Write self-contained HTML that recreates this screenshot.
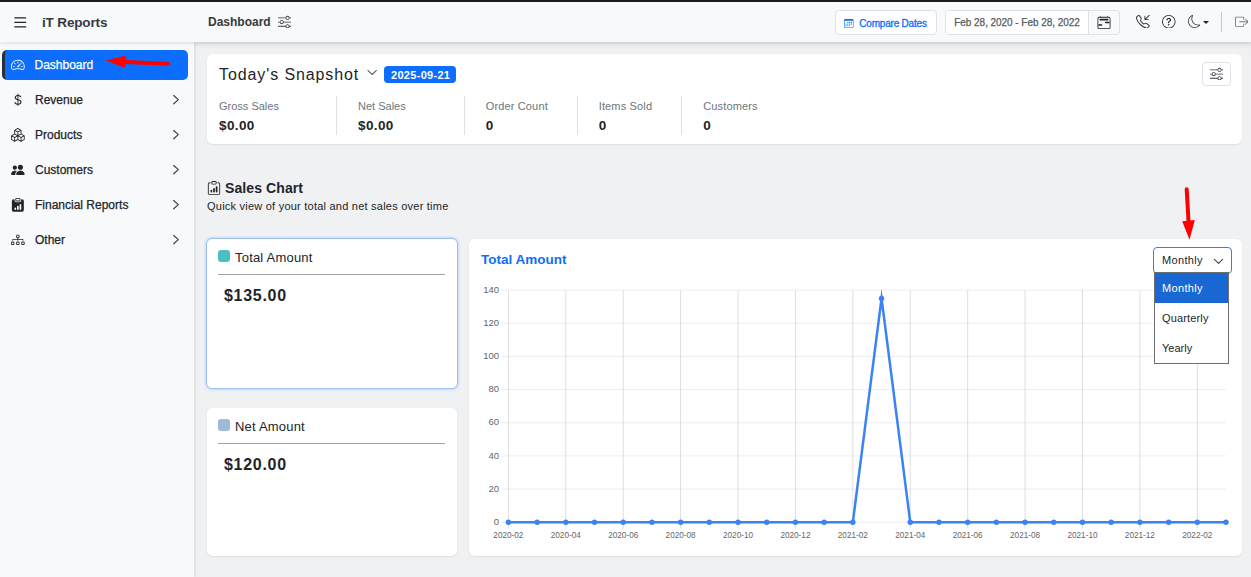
<!DOCTYPE html>
<html lang="en">
<head>
<meta charset="utf-8">
<title>iT Reports - Dashboard</title>
<style>
*{box-sizing:border-box;}
html,body{margin:0;padding:0;}
body{width:1251px;height:577px;overflow:hidden;background:#f0f1f3;font-family:"Liberation Sans",Arial,sans-serif;color:#212529;position:relative;}
.abs{position:absolute;}
#topbar{left:0;top:0;width:1251px;height:2px;background:#181b1f;z-index:9;}
#header{left:0;top:2px;width:1251px;height:40px;background:#f8f9fb;box-shadow:0 1px 4px rgba(0,0,0,.12);z-index:5;}
#sidebar{left:0;top:42px;width:194px;height:535px;background:#f8f9fa;box-shadow:1px 0 3px rgba(0,0,0,.10);z-index:3;}
#main{left:194px;top:42px;width:1057px;height:535px;background:#f0f1f3;box-shadow:inset 0 6px 6px -4px rgba(0,0,0,.07);}
.t{position:absolute;white-space:nowrap;line-height:1;}
.nav{position:absolute;left:2px;width:186px;height:30px;border-radius:5px;}
.nav.active{background:#0d6efd;border-left:3px solid #2b2f36;}
.nav .lbl{position:absolute;left:33px;top:8px;font-size:12px;-webkit-text-stroke:.25px currentColor;line-height:14px;color:#212529;white-space:nowrap;}
.nav.active .lbl{color:#fff;left:29.5px;}
.card{position:absolute;background:#fff;border-radius:6px;box-shadow:0 1px 2px rgba(0,0,0,.08);}
.stat-l{font-size:11px;color:#6c757d;}
.stat-v{font-size:13.5px;letter-spacing:.4px;font-weight:bold;color:#212529;}
.vsep{position:absolute;top:96px;width:1px;height:39px;background:#dee2e6;}
.btn{position:absolute;background:#fff;border:1px solid #dee2e6;border-radius:4px;}
.opt{position:absolute;left:0;width:73px;height:30px;font-size:11px;line-height:30px;padding-left:7px;color:#212529;}
</style>
</head>
<body>
<div id="topbar" class="abs"></div>
<div id="header" class="abs">
<svg class="abs" style="left:12px;top:12px" width="18" height="18" viewBox="12 14 18 18"><path d="M14.8 17.8H25.7M14.8 22.35H25.7M14.8 26.9H25.7" stroke="#212529" stroke-width="1.25" stroke-linecap="round" fill="none"/></svg>
<div class="t" style="left:42px;top:14px;font-size:13.5px;letter-spacing:-.15px;font-weight:bold;color:#343a40">iT Reports</div>
<div class="t" style="left:208px;top:14px;font-size:12px;font-weight:bold;color:#343a40">Dashboard</div>
<svg class="abs" style="left:278.2px;top:13.1px" width="13.3" height="13.3" viewBox="0 0 16 16" fill="#343a40" ><path fill-rule="evenodd" d="M11.5 2a1.5 1.5 0 1 0 0 3 1.5 1.5 0 0 0 0-3M9.05 3a2.5 2.5 0 0 1 4.9 0H16v1h-2.05a2.5 2.5 0 0 1-4.9 0H0V3zM4.5 7a1.5 1.5 0 1 0 0 3 1.5 1.5 0 0 0 0-3M2.05 8a2.5 2.5 0 0 1 4.9 0H16v1H6.95a2.5 2.5 0 0 1-4.9 0H0V8zm9.45 4a1.5 1.5 0 1 0 0 3 1.5 1.5 0 0 0 0-3m-2.45 1a2.5 2.5 0 0 1 4.9 0H16v1h-2.05a2.5 2.5 0 0 1-4.9 0H0v-1z"/></svg>
<div class="btn" style="left:835px;top:8px;width:102px;height:25px"></div>
<svg class="abs" style="left:844px;top:17px" width="9.5" height="9" viewBox="0 0 16 16" fill="#0d6efd" preserveAspectRatio="none"><path d="M14 0H2a2 2 0 0 0-2 2v12a2 2 0 0 0 2 2h12a2 2 0 0 0 2-2V2a2 2 0 0 0-2-2M1 3.857C1 3.384 1.448 3 2 3h12c.552 0 1 .384 1 .857v10.286c0 .473-.448.857-1 .857H2c-.552 0-1-.384-1-.857z"/><path d="M6.5 7a1 1 0 1 0 0-2 1 1 0 0 0 0 2m3 0a1 1 0 1 0 0-2 1 1 0 0 0 0 2m3 0a1 1 0 1 0 0-2 1 1 0 0 0 0 2m-9 3a1 1 0 1 0 0-2 1 1 0 0 0 0 2m3 0a1 1 0 1 0 0-2 1 1 0 0 0 0 2m3 0a1 1 0 1 0 0-2 1 1 0 0 0 0 2m3 0a1 1 0 1 0 0-2 1 1 0 0 0 0 2m-9 3a1 1 0 1 0 0-2 1 1 0 0 0 0 2m3 0a1 1 0 1 0 0-2 1 1 0 0 0 0 2m3 0a1 1 0 1 0 0-2 1 1 0 0 0 0 2"/></svg>
<div class="t" style="left:859.3px;top:17.1px;font-size:10px;letter-spacing:-.2px;-webkit-text-stroke:.3px;color:#0d6efd">Compare Dates</div>
<div class="btn" style="left:945px;top:8px;width:175px;height:25px;background:#f8f9fa"></div>
<div class="abs" style="left:946px;top:9px;width:143px;height:23px;background:#fff;border-right:1px solid #dee2e6;border-radius:3px 0 0 3px"></div>
<div class="t" style="left:954.3px;top:16.4px;font-size:10px;letter-spacing:-.05px;-webkit-text-stroke:.25px;color:#555b61">Feb 28, 2020 - Feb 28, 2022</div>
<svg class="abs" style="left:1097px;top:14px" width="14" height="13" viewBox="0 0 16 16" fill="#212529" ><path d="M3.5 0a.5.5 0 0 1 .5.5V1h8V.5a.5.5 0 0 1 1 0V1h1a2 2 0 0 1 2 2v11a2 2 0 0 1-2 2H2a2 2 0 0 1-2-2V3a2 2 0 0 1 2-2h1V.5a.5.5 0 0 1 .5-.5M2 2a1 1 0 0 0-1 1v11a1 1 0 0 0 1 1h12a1 1 0 0 0 1-1V3a1 1 0 0 0-1-1z"/><path d="M2.5 4a.5.5 0 0 1 .5-.5h10a.5.5 0 0 1 .5.5v1a.5.5 0 0 1-.5.5H3a.5.5 0 0 1-.5-.5zM9 8a1 1 0 0 1 1-1h5v2h-5a1 1 0 0 1-1-1m-8 2h4a1 1 0 1 1 0 2H1z"/></svg>
<svg class="abs" style="left:1136.3px;top:12.5px" width="13.6" height="13.6" viewBox="0 0 16 16" fill="#212529" ><path d="M15.854.146a.5.5 0 0 1 0 .708L11.707 5H14.500a.5.5 0 0 1 0 1h-4a.5.5 0 0 1-.5-.5v-4a.5.5 0 0 1 1 0v2.793L15.146.146a.5.5 0 0 1 .708 0m-12.200 1.182a.678.678 0 0 0-1.015-.063L1.605 2.300c-.483.484-.661 1.169-.450 1.770a17.600 17.600 0 0 0 4.168 6.608 17.600 17.600 0 0 0 6.608 4.168c.601.211 1.286.033 1.770-.450l1.034-1.034a.678.678 0 0 0-.063-1.015l-2.307-1.794a.68.68 0 0 0-.580-.122l-2.190.547a1.750 1.750 0 0 1-1.657-.459L5.482 8.062a1.750 1.750 0 0 1-.460-1.657l.548-2.190a.68.68 0 0 0-.122-.580zM1.884.511a1.745 1.745 0 0 1 2.612.163L6.290 2.980c.329.423.445.974.315 1.494l-.547 2.190a.68.68 0 0 0 .178.643l2.457 2.457a.68.68 0 0 0 .644.178l2.189-.547a1.750 1.750 0 0 1 1.494.315l2.306 1.794c.829.645.905 1.870.163 2.611l-1.034 1.034c-.740.740-1.846 1.065-2.877.702a18.600 18.600 0 0 1-7.010-4.420 18.600 18.600 0 0 1-4.420-7.009c-.362-1.030-.037-2.137.703-2.877z"/></svg>
<svg class="abs" style="left:1162px;top:12.5px" width="13.6" height="13.6" viewBox="0 0 16 16" fill="#212529" ><path d="M8 15A7 7 0 1 1 8 1a7 7 0 0 1 0 14m0 1A8 8 0 1 0 8 0a8 8 0 0 0 0 16"/><path d="M5.255 5.786a.237.237 0 0 0 .241.247h.825c.138 0 .248-.113.266-.250.090-.656.540-1.134 1.342-1.134.686 0 1.314.343 1.314 1.168 0 .635-.374.927-.965 1.371-.673.489-1.206 1.060-1.168 1.987l.003.217a.25.25 0 0 0 .25.246h.811a.25.25 0 0 0 .25-.250v-.105c0-.718.273-.927 1.010-1.486.609-.463 1.244-.977 1.244-2.056 0-1.511-1.276-2.241-2.673-2.241-1.267 0-2.655.590-2.750 2.286m1.557 5.763c0 .533.425.927 1.010.927.609 0 1.028-.394 1.028-.927 0-.552-.420-.940-1.029-.940-.584 0-1.009.388-1.009.940"/></svg>
<svg class="abs" style="left:1188px;top:12.5px" width="13" height="13" viewBox="0 0 16 16" fill="#343a40" ><path d="M6 .278a.77.77 0 0 1 .080.858 7.200 7.200 0 0 0-.878 3.460c0 4.021 3.278 7.277 7.318 7.277q.792-.001 1.533-.160a.79.79 0 0 1 .810.316.73.73 0 0 1-.031.893A8.350 8.350 0 0 1 8.344 16C3.734 16 0 12.286 0 7.710 0 4.266 2.114 1.312 5.124.060A.75.75 0 0 1 6 .278M4.858 1.311A7.270 7.270 0 0 0 1.025 7.710c0 4.020 3.279 7.276 7.319 7.276a7.320 7.320 0 0 0 5.205-2.162q-.506.063-1.029.063c-4.610 0-8.343-3.714-8.343-8.290 0-1.167.242-2.278.681-3.286"/></svg>
<svg class="abs" style="left:1203px;top:19px" width="6" height="3" viewBox="0 0 6 3"><path d="M0 0h6L3 3z" fill="#212529"/></svg>
<div class="abs" style="left:1221px;top:10px;width:1px;height:20px;background:#c4c8cc"></div>
<svg class="abs" style="left:1234.6px;top:12.9px" width="13.5" height="13.5" viewBox="0 0 16 16" fill="#6c757d" ><path fill-rule="evenodd" d="M10 12.500a.5.5 0 0 1-.5.5h-8a.5.5 0 0 1-.5-.5v-9a.5.5 0 0 1 .5-.5h8a.5.5 0 0 1 .5.5v2a.5.5 0 0 0 1 0v-2A1.500 1.500 0 0 0 9.500 2h-8A1.500 1.500 0 0 0 0 3.500v9A1.500 1.500 0 0 0 1.500 14h8a1.500 1.500 0 0 0 1.500-1.500v-2a.5.5 0 0 0-1 0z"/><path fill-rule="evenodd" d="M15.854 8.354a.5.5 0 0 0 0-.708l-3-3a.5.5 0 0 0-.708.708L14.293 7.500H5.500a.5.5 0 0 0 0 1h8.793l-2.147 2.146a.5.5 0 0 0 .708.708z"/></svg>
</div>
<div id="sidebar" class="abs">
<div class="nav active" style="top:8px">
<svg class="abs" style="left:6.15px;top:8.15px" width="13.7" height="13.7" viewBox="0 0 16 16" fill="#fff" ><path d="M8 4a.5.5 0 0 1 .5.5V6a.5.5 0 0 1-1 0V4.5A.5.5 0 0 1 8 4M3.732 5.732a.5.5 0 0 1 .707 0l.915.914a.5.5 0 1 1-.708.708l-.914-.915a.5.5 0 0 1 0-.707M2 10a.5.5 0 0 1 .5-.5h1.586a.5.5 0 0 1 0 1H2.5A.5.5 0 0 1 2 10m9.5 0a.5.5 0 0 1 .5-.5h1.5a.5.5 0 0 1 0 1H12a.5.5 0 0 1-.5-.5m.754-4.246a.39.39 0 0 0-.527-.02L7.547 9.31a.91.91 0 1 0 1.302 1.258l3.434-4.297a.39.39 0 0 0-.029-.518z"/><path fill-rule="evenodd" d="M0 10a8 8 0 1 1 15.547 2.661c-.442 1.253-1.845 1.602-2.932 1.25C11.309 13.488 9.475 13 8 13c-1.474 0-3.31.488-4.615.911-1.087.352-2.49.003-2.932-1.25A8 8 0 0 1 0 10m8-7a7 7 0 0 0-6.603 9.329c.203.575.923.876 1.68.63C4.397 12.533 6.358 12 8 12s3.604.532 4.923.96c.757.245 1.477-.056 1.68-.631A7 7 0 0 0 8 3"/></svg>
<span class="lbl">Dashboard</span>
</div>
<div class="nav" style="top:43px">
<svg class="abs" style="left:9.15px;top:8.15px" width="13.7" height="13.7" viewBox="0 0 16 16" fill="#212529" ><path d="M4 10.781c.148 1.667 1.513 2.85 3.591 3.003V15h1.043v-1.216c2.27-.179 3.678-1.438 3.678-3.3 0-1.59-.947-2.51-2.956-3.028l-.722-.187V3.467c1.122.11 1.879.714 2.07 1.616h1.47c-.166-1.6-1.54-2.748-3.54-2.875V1H7.591v1.233c-1.939.23-3.27 1.472-3.27 3.156 0 1.454.966 2.483 2.661 2.917l.61.162v4.031c-1.149-.17-1.94-.8-2.131-1.718zm3.391-3.836c-1.043-.263-1.6-.825-1.6-1.616 0-.944.704-1.641 1.8-1.828v3.495l-.2-.05zm1.591 1.872c1.287.323 1.852.859 1.852 1.769 0 1.097-.826 1.828-2.2 1.939V8.73z"/></svg>
<span class="lbl">Revenue</span>
<svg class="abs" style="left:168px;top:8px" width="12" height="14" viewBox="170 50 12 14"><path d="M173.7 52.5L178.3 56.65L173.7 60.8" fill="none" stroke="#3a3f45" stroke-width="1.15" stroke-linecap="round" stroke-linejoin="round"/></svg>
</div>
<div class="nav" style="top:78px">
<svg class="abs" style="left:9.15px;top:8.15px" width="13.7" height="13.7" viewBox="0 0 16 16" fill="#212529" ><path d="M7.752.066a.5.5 0 0 1 .496 0l3.750 2.143a.5.5 0 0 1 .252.434v3.995l3.498 2A.5.5 0 0 1 16 9.070v4.286a.5.5 0 0 1-.252.434l-3.750 2.143a.5.5 0 0 1-.496 0l-3.502-2-3.502 2.001a.5.5 0 0 1-.496 0l-3.750-2.143A.5.5 0 0 1 0 13.357V9.071a.5.5 0 0 1 .252-.434L3.750 6.638V2.643a.5.5 0 0 1 .252-.434zM4.250 7.504 1.508 9.071l2.742 1.567 2.742-1.567zM7.500 9.933l-2.750 1.571v3.134l2.750-1.571zm1 3.134 2.750 1.571v-3.134L8.500 9.933zm.508-3.996 2.742 1.567 2.742-1.567-2.742-1.567zm2.242-2.433V3.504L8.500 5.076V8.210zM7.500 8.210V5.076L4.750 3.504v3.134zM5.258 2.643 8 4.210l2.742-1.567L8 1.076zM15 9.933l-2.750 1.571v3.134L15 13.067zM3.750 14.638v-3.134L1 9.933v3.134z"/></svg>
<span class="lbl">Products</span>
<svg class="abs" style="left:168px;top:8px" width="12" height="14" viewBox="170 50 12 14"><path d="M173.7 52.5L178.3 56.65L173.7 60.8" fill="none" stroke="#3a3f45" stroke-width="1.15" stroke-linecap="round" stroke-linejoin="round"/></svg>
</div>
<div class="nav" style="top:113px">
<svg class="abs" style="left:9.15px;top:8.15px" width="13.7" height="13.7" viewBox="0 0 16 16" fill="#212529" ><path d="M7 14s-1 0-1-1 1-4 5-4 5 3 5 4-1 1-1 1zm4-6a3 3 0 1 0 0-6 3 3 0 0 0 0 6m-5.784 6A2.24 2.24 0 0 1 5 13c0-1.355.68-2.75 1.936-3.72A6.3 6.3 0 0 0 5 9c-4 0-5 3-5 4s1 1 1 1zM4.5 8a2.5 2.5 0 1 0 0-5 2.5 2.5 0 0 0 0 5"/></svg>
<span class="lbl">Customers</span>
<svg class="abs" style="left:168px;top:8px" width="12" height="14" viewBox="170 50 12 14"><path d="M173.7 52.5L178.3 56.65L173.7 60.8" fill="none" stroke="#3a3f45" stroke-width="1.15" stroke-linecap="round" stroke-linejoin="round"/></svg>
</div>
<div class="nav" style="top:148px">
<svg class="abs" style="left:9.15px;top:8.15px" width="13.7" height="13.7" viewBox="0 0 16 16" fill="#212529" ><path d="M6.5 0A1.5 1.5 0 0 0 5 1.5v1A1.5 1.5 0 0 0 6.5 4h3A1.5 1.5 0 0 0 11 2.5v-1A1.5 1.5 0 0 0 9.5 0zm3 1a.5.5 0 0 1 .5.5v1a.5.5 0 0 1-.5.5h-3a.5.5 0 0 1-.5-.5v-1a.5.5 0 0 1 .5-.5z"/><path d="M4 1.500H3a2 2 0 0 0-2 2V14a2 2 0 0 0 2 2h10a2 2 0 0 0 2-2V3.500a2 2 0 0 0-2-2h-1v1A2.500 2.500 0 0 1 9.500 5h-3A2.500 2.500 0 0 1 4 2.500zM10 8a1 1 0 1 1 2 0v5a1 1 0 1 1-2 0zm-6 4a1 1 0 1 1 2 0v1a1 1 0 1 1-2 0zm4-3a1 1 0 0 1 1 1v3a1 1 0 1 1-2 0v-3a1 1 0 0 1 1-1"/></svg>
<span class="lbl">Financial Reports</span>
<svg class="abs" style="left:168px;top:8px" width="12" height="14" viewBox="170 50 12 14"><path d="M173.7 52.5L178.3 56.65L173.7 60.8" fill="none" stroke="#3a3f45" stroke-width="1.15" stroke-linecap="round" stroke-linejoin="round"/></svg>
</div>
<div class="nav" style="top:183px">
<svg class="abs" style="left:9.15px;top:8.15px" width="13.7" height="13.7" viewBox="0 0 16 16" fill="#212529" ><path fill-rule="evenodd" d="M6 3.500A1.500 1.500 0 0 1 7.500 2h1A1.500 1.500 0 0 1 10 3.500v1A1.500 1.500 0 0 1 8.500 6v1H14a.5.5 0 0 1 .5.5v1a.5.5 0 0 1-1 0V8h-5v.5a.5.5 0 0 1-1 0V8h-5v.5a.5.5 0 0 1-1 0v-1A.5.5 0 0 1 2 7h5.500V6A1.500 1.500 0 0 1 6 4.500zM8.500 5a.5.5 0 0 0 .5-.5v-1a.5.5 0 0 0-.5-.5h-1a.5.5 0 0 0-.5.5v1a.5.5 0 0 0 .5.5zM0 11.500A1.500 1.500 0 0 1 1.500 10h1A1.500 1.500 0 0 1 4 11.500v1A1.500 1.500 0 0 1 2.500 14h-1A1.500 1.500 0 0 1 0 12.500zm1.500-.5a.5.5 0 0 0-.5.5v1a.5.5 0 0 0 .5.5h1a.5.5 0 0 0 .5-.5v-1a.5.5 0 0 0-.5-.5zm4.500.5A1.500 1.500 0 0 1 7.500 10h1a1.500 1.500 0 0 1 1.500 1.500v1A1.500 1.500 0 0 1 8.500 14h-1A1.500 1.500 0 0 1 6 12.500zm1.500-.5a.5.5 0 0 0-.5.5v1a.5.5 0 0 0 .5.5h1a.5.5 0 0 0 .5-.5v-1a.5.5 0 0 0-.5-.5zm4.500.5a1.500 1.500 0 0 1 1.500-1.500h1a1.500 1.500 0 0 1 1.500 1.500v1a1.500 1.500 0 0 1-1.500 1.500h-1a1.500 1.500 0 0 1-1.500-1.500zm1.500-.5a.5.5 0 0 0-.5.5v1a.5.5 0 0 0 .5.5h1a.5.5 0 0 0 .5-.5v-1a.5.5 0 0 0-.5-.5z"/></svg>
<span class="lbl">Other</span>
<svg class="abs" style="left:168px;top:8px" width="12" height="14" viewBox="170 50 12 14"><path d="M173.7 52.5L178.3 56.65L173.7 60.8" fill="none" stroke="#3a3f45" stroke-width="1.15" stroke-linecap="round" stroke-linejoin="round"/></svg>
</div>
</div>
<div id="main" class="abs"></div>
<div class="card" style="left:207px;top:54px;width:1035px;height:90px"></div>
<div class="t" style="left:219px;top:67px;font-size:16px;letter-spacing:.9px">Today's Snapshot</div>
<svg class="abs" style="left:365px;top:66px" width="14" height="12" viewBox="365 66 14 12"><path d="M367.9 70.4L372.15 74.5L376.4 70.4" fill="none" stroke="#5a5f64" stroke-width="1.05" stroke-linecap="round" stroke-linejoin="round"/></svg>
<div class="abs" style="left:384px;top:66px;width:72px;height:17px;background:#0d6efd;border-radius:4px"></div>
<div class="t" style="left:391px;top:70px;font-size:11px;letter-spacing:.3px;font-weight:bold;color:#fff">2025-09-21</div>
<div class="btn" style="left:1202px;top:62px;width:29px;height:24px"></div>
<svg class="abs" style="left:1209.9px;top:67.1px" width="13.3" height="13.3" viewBox="0 0 16 16" fill="#343a40" ><path fill-rule="evenodd" d="M11.5 2a1.5 1.5 0 1 0 0 3 1.5 1.5 0 0 0 0-3M9.05 3a2.5 2.5 0 0 1 4.9 0H16v1h-2.05a2.5 2.5 0 0 1-4.9 0H0V3zM4.5 7a1.5 1.5 0 1 0 0 3 1.5 1.5 0 0 0 0-3M2.05 8a2.5 2.5 0 0 1 4.9 0H16v1H6.95a2.5 2.5 0 0 1-4.9 0H0V8zm9.45 4a1.5 1.5 0 1 0 0 3 1.5 1.5 0 0 0 0-3m-2.45 1a2.5 2.5 0 0 1 4.9 0H16v1h-2.05a2.5 2.5 0 0 1-4.9 0H0v-1z"/></svg>
<div class="t stat-l" style="left:219px;top:101px">Gross Sales</div>
<div class="t stat-v" style="left:219px;top:119px">$0.00</div>
<div class="t stat-l" style="left:358px;top:101px">Net Sales</div>
<div class="t stat-v" style="left:358px;top:119px">$0.00</div>
<div class="t stat-l" style="letter-spacing:.15px;left:485.7px;top:101px">Order Count</div>
<div class="t stat-v" style="left:485.7px;top:119px">0</div>
<div class="t stat-l" style="letter-spacing:.15px;left:598.7px;top:101px">Items Sold</div>
<div class="t stat-v" style="left:598.7px;top:119px">0</div>
<div class="t stat-l" style="letter-spacing:.15px;left:703.2px;top:101px">Customers</div>
<div class="t stat-v" style="left:703.2px;top:119px">0</div>
<div class="vsep" style="left:336px"></div>
<div class="vsep" style="left:464px"></div>
<div class="vsep" style="left:577px"></div>
<div class="vsep" style="left:681px"></div>
<svg class="abs" style="left:207px;top:181px" width="14" height="14" viewBox="0 0 16 16" fill="#212529" ><path d="M4 11a1 1 0 1 1 2 0v1a1 1 0 1 1-2 0zm6-4a1 1 0 1 1 2 0v5a1 1 0 1 1-2 0zM7 9a1 1 0 0 1 2 0v3a1 1 0 1 1-2 0z"/><path d="M4 1.500H3a2 2 0 0 0-2 2V14a2 2 0 0 0 2 2h10a2 2 0 0 0 2-2V3.500a2 2 0 0 0-2-2h-1v1h1a1 1 0 0 1 1 1V14a1 1 0 0 1-1 1H3a1 1 0 0 1-1-1V3.500a1 1 0 0 1 1-1h1z"/><path d="M9.500 1a.5.5 0 0 1 .5.5v1a.5.5 0 0 1-.5.5h-3a.5.5 0 0 1-.5-.5v-1a.5.5 0 0 1 .5-.5zm-3-1A1.500 1.500 0 0 0 5 1.500v1A1.500 1.500 0 0 0 6.500 4h3A1.500 1.500 0 0 0 11 2.500v-1A1.500 1.500 0 0 0 9.500 0z"/></svg>
<div class="t" style="left:225px;top:181px;font-size:14px;letter-spacing:.1px;font-weight:bold;color:#212529">Sales Chart</div>
<div class="t" style="left:207px;top:201px;font-size:11px;letter-spacing:.23px;color:#212529">Quick view of your total and net sales over time</div>
<div class="card" style="left:206px;top:238px;width:252px;height:151px;border:1px solid #9dc0ef;box-shadow:0 0 3px rgba(13,110,253,.35)"></div>
<div class="abs" style="left:218px;top:250px;width:12px;height:12px;border-radius:3px;background:#4bc0c0"></div>
<div class="t" style="left:235px;top:251px;font-size:13px;letter-spacing:.2px">Total Amount</div>
<div class="abs" style="left:218px;top:274px;width:227px;height:1px;background:#a5a5a5"></div>
<div class="t" style="left:224px;top:288px;font-size:16px;letter-spacing:.7px;font-weight:bold">$135.00</div>
<div class="card" style="left:207px;top:408px;width:250px;height:148px"></div>
<div class="abs" style="left:218px;top:419px;width:12px;height:12px;border-radius:3px;background:#9dbad9"></div>
<div class="t" style="left:235px;top:420px;font-size:13px;letter-spacing:.2px">Net Amount</div>
<div class="abs" style="left:218px;top:443px;width:227px;height:1px;background:#a5a5a5"></div>
<div class="t" style="left:224px;top:457px;font-size:16px;letter-spacing:.7px;font-weight:bold">$120.00</div>
<div class="card" style="left:469px;top:239px;width:773px;height:317px"></div>
<div class="t" style="left:481px;top:253px;font-size:13.5px;font-weight:bold;color:#0d6efd">Total Amount</div>
<svg class="abs" style="left:469px;top:239px" width="773" height="317" viewBox="469 239 773 317" font-family="Liberation Sans, Arial, sans-serif">
<line x1="501.5" y1="522.30" x2="1226" y2="522.30" stroke="rgba(0,0,0,0.1)" stroke-width="0.75"/>
<text x="499" y="524.90" font-size="9.5" fill="#666" text-anchor="end">0</text>
<line x1="501.5" y1="489.13" x2="1226" y2="489.13" stroke="rgba(0,0,0,0.1)" stroke-width="0.75"/>
<text x="499" y="491.73" font-size="9.5" fill="#666" text-anchor="end">20</text>
<line x1="501.5" y1="455.96" x2="1226" y2="455.96" stroke="rgba(0,0,0,0.1)" stroke-width="0.75"/>
<text x="499" y="458.56" font-size="9.5" fill="#666" text-anchor="end">40</text>
<line x1="501.5" y1="422.79" x2="1226" y2="422.79" stroke="rgba(0,0,0,0.1)" stroke-width="0.75"/>
<text x="499" y="425.39" font-size="9.5" fill="#666" text-anchor="end">60</text>
<line x1="501.5" y1="389.61" x2="1226" y2="389.61" stroke="rgba(0,0,0,0.1)" stroke-width="0.75"/>
<text x="499" y="392.21" font-size="9.5" fill="#666" text-anchor="end">80</text>
<line x1="501.5" y1="356.44" x2="1226" y2="356.44" stroke="rgba(0,0,0,0.1)" stroke-width="0.75"/>
<text x="499" y="359.04" font-size="9.5" fill="#666" text-anchor="end">100</text>
<line x1="501.5" y1="323.27" x2="1226" y2="323.27" stroke="rgba(0,0,0,0.1)" stroke-width="0.75"/>
<text x="499" y="325.87" font-size="9.5" fill="#666" text-anchor="end">120</text>
<line x1="501.5" y1="290.10" x2="1226" y2="290.10" stroke="rgba(0,0,0,0.1)" stroke-width="0.75"/>
<text x="499" y="292.70" font-size="9.5" fill="#666" text-anchor="end">140</text>
<line x1="508.40" y1="290.10" x2="508.40" y2="528.5" stroke="rgba(0,0,0,0.13)" stroke-width="1"/>
<text x="508.40" y="538.2" font-size="8.2" fill="#666" text-anchor="middle">2020-02</text>
<line x1="565.81" y1="290.10" x2="565.81" y2="528.5" stroke="rgba(0,0,0,0.13)" stroke-width="1"/>
<text x="565.81" y="538.2" font-size="8.2" fill="#666" text-anchor="middle">2020-04</text>
<line x1="623.22" y1="290.10" x2="623.22" y2="528.5" stroke="rgba(0,0,0,0.13)" stroke-width="1"/>
<text x="623.22" y="538.2" font-size="8.2" fill="#666" text-anchor="middle">2020-06</text>
<line x1="680.62" y1="290.10" x2="680.62" y2="528.5" stroke="rgba(0,0,0,0.13)" stroke-width="1"/>
<text x="680.62" y="538.2" font-size="8.2" fill="#666" text-anchor="middle">2020-08</text>
<line x1="738.03" y1="290.10" x2="738.03" y2="528.5" stroke="rgba(0,0,0,0.13)" stroke-width="1"/>
<text x="738.03" y="538.2" font-size="8.2" fill="#666" text-anchor="middle">2020-10</text>
<line x1="795.44" y1="290.10" x2="795.44" y2="528.5" stroke="rgba(0,0,0,0.13)" stroke-width="1"/>
<text x="795.44" y="538.2" font-size="8.2" fill="#666" text-anchor="middle">2020-12</text>
<line x1="852.85" y1="290.10" x2="852.85" y2="528.5" stroke="rgba(0,0,0,0.13)" stroke-width="1"/>
<text x="852.85" y="538.2" font-size="8.2" fill="#666" text-anchor="middle">2021-02</text>
<line x1="910.26" y1="290.10" x2="910.26" y2="528.5" stroke="rgba(0,0,0,0.13)" stroke-width="1"/>
<text x="910.26" y="538.2" font-size="8.2" fill="#666" text-anchor="middle">2021-04</text>
<line x1="967.66" y1="290.10" x2="967.66" y2="528.5" stroke="rgba(0,0,0,0.13)" stroke-width="1"/>
<text x="967.66" y="538.2" font-size="8.2" fill="#666" text-anchor="middle">2021-06</text>
<line x1="1025.07" y1="290.10" x2="1025.07" y2="528.5" stroke="rgba(0,0,0,0.13)" stroke-width="1"/>
<text x="1025.07" y="538.2" font-size="8.2" fill="#666" text-anchor="middle">2021-08</text>
<line x1="1082.48" y1="290.10" x2="1082.48" y2="528.5" stroke="rgba(0,0,0,0.13)" stroke-width="1"/>
<text x="1082.48" y="538.2" font-size="8.2" fill="#666" text-anchor="middle">2021-10</text>
<line x1="1139.89" y1="290.10" x2="1139.89" y2="528.5" stroke="rgba(0,0,0,0.13)" stroke-width="1"/>
<text x="1139.89" y="538.2" font-size="8.2" fill="#666" text-anchor="middle">2021-12</text>
<line x1="1197.30" y1="290.10" x2="1197.30" y2="528.5" stroke="rgba(0,0,0,0.13)" stroke-width="1"/>
<text x="1197.30" y="538.2" font-size="8.2" fill="#666" text-anchor="middle">2022-02</text>
<polyline fill="none" stroke="#3b82f6" stroke-width="2.5" stroke-linejoin="miter" stroke-miterlimit="10" points="508.40,522.30 537.10,522.30 565.81,522.30 594.51,522.30 623.22,522.30 651.92,522.30 680.62,522.30 709.33,522.30 738.03,522.30 766.74,522.30 795.44,522.30 824.14,522.30 852.85,522.30 881.55,298.39 910.26,522.30 938.96,522.30 967.66,522.30 996.37,522.30 1025.07,522.30 1053.78,522.30 1082.48,522.30 1111.18,522.30 1139.89,522.30 1168.59,522.30 1197.30,522.30 1226.00,522.30"/>
<circle cx="508.40" cy="522.30" r="2.7" fill="#3b82f6"/>
<circle cx="537.10" cy="522.30" r="2.7" fill="#3b82f6"/>
<circle cx="565.81" cy="522.30" r="2.7" fill="#3b82f6"/>
<circle cx="594.51" cy="522.30" r="2.7" fill="#3b82f6"/>
<circle cx="623.22" cy="522.30" r="2.7" fill="#3b82f6"/>
<circle cx="651.92" cy="522.30" r="2.7" fill="#3b82f6"/>
<circle cx="680.62" cy="522.30" r="2.7" fill="#3b82f6"/>
<circle cx="709.33" cy="522.30" r="2.7" fill="#3b82f6"/>
<circle cx="738.03" cy="522.30" r="2.7" fill="#3b82f6"/>
<circle cx="766.74" cy="522.30" r="2.7" fill="#3b82f6"/>
<circle cx="795.44" cy="522.30" r="2.7" fill="#3b82f6"/>
<circle cx="824.14" cy="522.30" r="2.7" fill="#3b82f6"/>
<circle cx="852.85" cy="522.30" r="2.7" fill="#3b82f6"/>
<circle cx="881.55" cy="298.39" r="2.7" fill="#3b82f6"/>
<circle cx="910.26" cy="522.30" r="2.7" fill="#3b82f6"/>
<circle cx="938.96" cy="522.30" r="2.7" fill="#3b82f6"/>
<circle cx="967.66" cy="522.30" r="2.7" fill="#3b82f6"/>
<circle cx="996.37" cy="522.30" r="2.7" fill="#3b82f6"/>
<circle cx="1025.07" cy="522.30" r="2.7" fill="#3b82f6"/>
<circle cx="1053.78" cy="522.30" r="2.7" fill="#3b82f6"/>
<circle cx="1082.48" cy="522.30" r="2.7" fill="#3b82f6"/>
<circle cx="1111.18" cy="522.30" r="2.7" fill="#3b82f6"/>
<circle cx="1139.89" cy="522.30" r="2.7" fill="#3b82f6"/>
<circle cx="1168.59" cy="522.30" r="2.7" fill="#3b82f6"/>
<circle cx="1197.30" cy="522.30" r="2.7" fill="#3b82f6"/>
<circle cx="1226.00" cy="522.30" r="2.7" fill="#3b82f6"/>
</svg>
<div class="abs" style="left:1153px;top:247px;width:79px;height:27px;background:#fff;border:1px solid #3d7fd9;border-radius:4px"></div>
<div class="t" style="left:1162px;top:255px;font-size:11px;letter-spacing:.35px">Monthly</div>
<svg class="abs" style="left:1213px;top:258px" width="11" height="7" viewBox="0 0 11 7"><path d="M1.4 1.4L5.5 5.4L9.6 1.4" fill="none" stroke="#4a4f55" stroke-width="1.2" stroke-linecap="round" stroke-linejoin="round"/></svg>
<div class="abs" style="left:1154px;top:272px;width:75px;height:92px;background:#fff;border:1px solid #6e6e6e"><div class="opt" style="top:0;background:#1967d2;color:#fff;letter-spacing:.35px">Monthly</div><div class="opt" style="top:30px;letter-spacing:.15px">Quarterly</div><div class="opt" style="top:60px">Yearly</div></div>
<svg class="abs" style="left:100px;top:50px;z-index:8" width="80" height="24" viewBox="100 50 80 24"><path d="M126 62 L168 63.7" stroke="#ff0000" stroke-width="4.1" stroke-linecap="round" fill="none"/><path d="M105.8 60.5 L125.9 55.4 L125.1 67.9 Z" fill="#ff0000"/></svg>
<svg class="abs" style="left:1176px;top:184px;z-index:8" width="26" height="60" viewBox="1176 184 26 60"><path d="M1186.7 189.3 L1188.5 221" stroke="#ff0000" stroke-width="4" stroke-linecap="round" fill="none"/><path d="M1189.5 239.8 L1182.2 221.2 L1194.8 220 Z" fill="#ff0000"/></svg>
</body>
</html>
